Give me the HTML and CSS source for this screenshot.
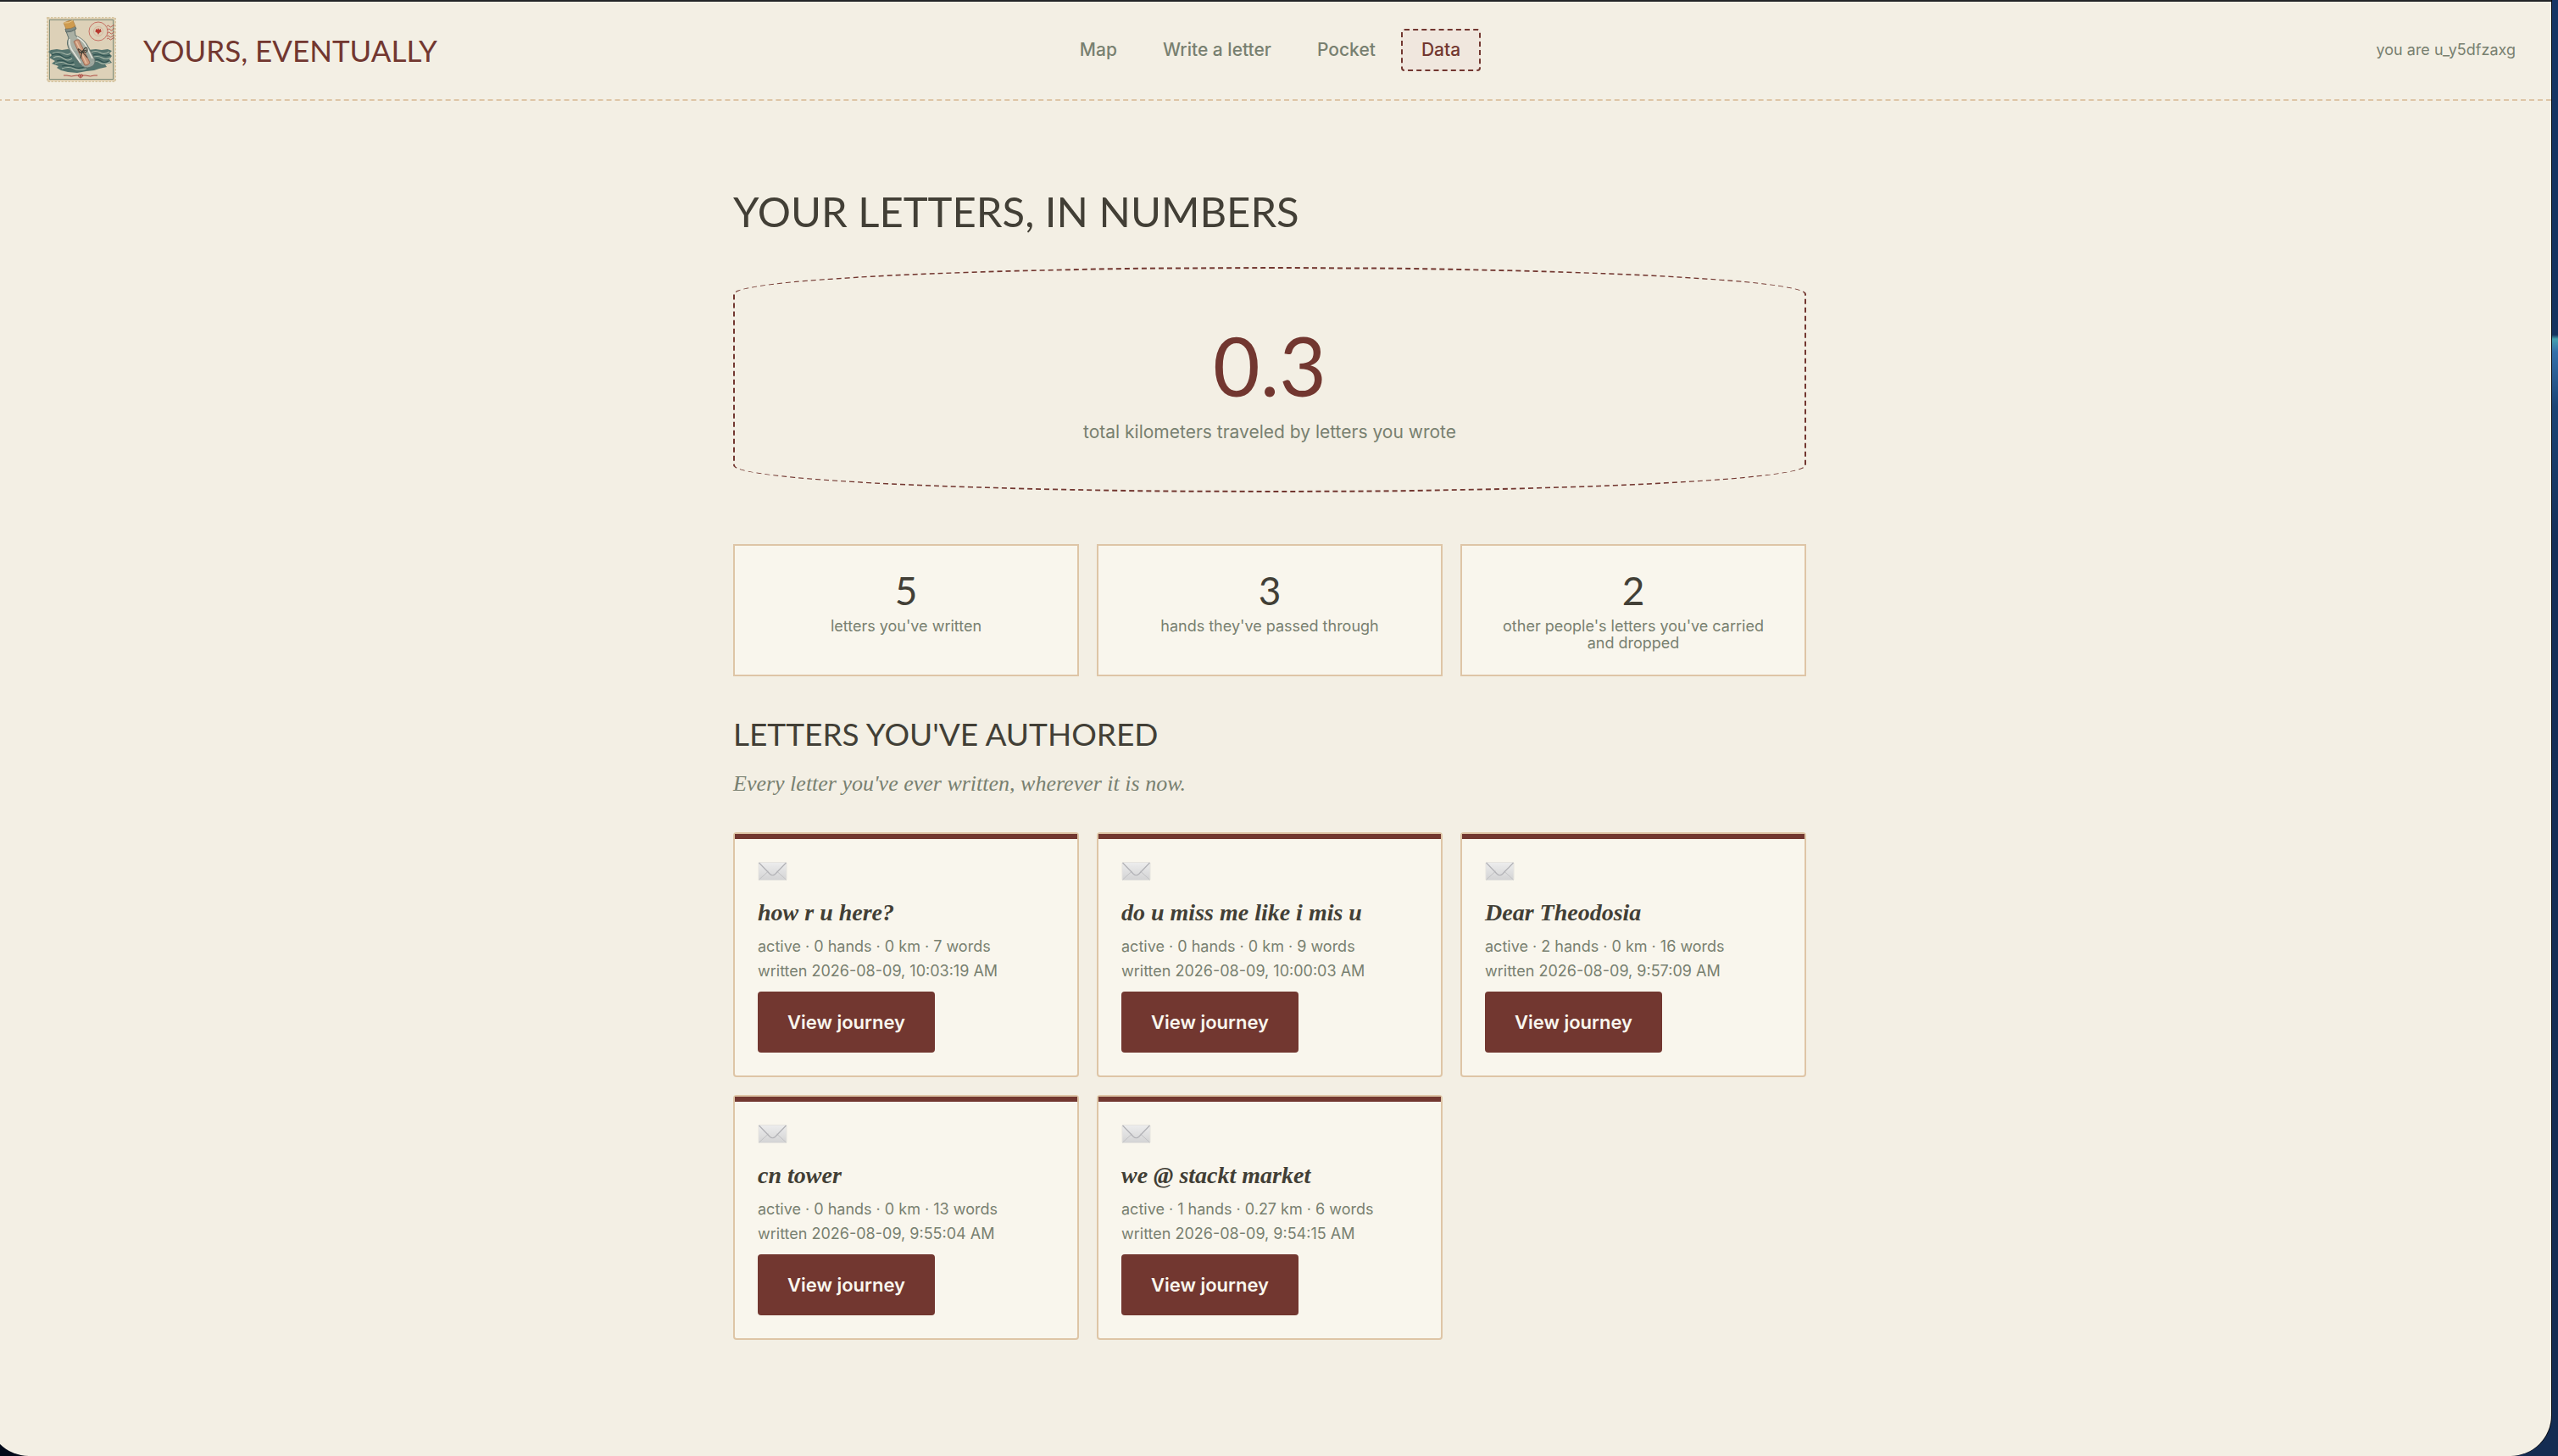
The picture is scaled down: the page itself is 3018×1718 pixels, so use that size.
FILE: index.html
```html
<!DOCTYPE html>
<html lang="en">
<head>
    <meta charset="UTF-8">
    <meta name="viewport" content="width=device-width, initial-scale=1.0">
    <title>Yours, Eventually</title>
    <link rel="stylesheet" href="styles.css">
</head>
<body>
    <!-- envelope shared by every letter card -->
    <svg class="sprite" aria-hidden="true">
        <linearGradient id="paper" x1="0" y1="0" x2="0" y2="1">
            <stop offset="0" stop-color="#ededed"/>
            <stop offset="1" stop-color="#d3d3d4"/>
        </linearGradient>
        <symbol id="envelope" viewBox="0 0 34 22">
            <rect x="0.5" y="0.5" width="33" height="21" rx="1" fill="url(#paper)" stroke="#e6e4df"/>
            <path d="M1 21l11-10M33 21L22 11" fill="none" stroke="#c2c2c4"/>
            <path d="M1 1l13 13.500q3 2.500 6 0L33 1" fill="none" stroke="#b1b1b5" stroke-width="1.200"/>
        </symbol>
    </svg>

    <div class="page">
        <header class="site-header">
            <a class="brand" href="#">
                <svg class="stamp" viewBox="0 0 82 77" aria-hidden="true">
                    <rect x="1" y="1" width="80" height="75" fill="#ddd0b4"/>
                    <rect x="1" y="1" width="80" height="75" fill="none" stroke="#d8c7a4" stroke-width="2" stroke-dasharray="2.500 1.500"/>
                    <rect x="3.500" y="3.500" width="75" height="70" fill="#ddd1b8" stroke="#7e8c7a"/>
                    <!-- sea -->
                    <path d="M5 39l7-1 6 1 7-1 8 2 16-1 9-1 7 1 7-1 5 2-3 3 3 3-3 4 3 4-8 2 2 3-9 2-6 2-9 1-11 2-11-1-8-2-5-3 2-2-8-3 4-3-7-4 3-3-4-4z" fill="#55746e"/>
                    <path d="M7 43q7-3 13 0t9-1M8 48q7-3 12 1t10 0M10 55q8-3 13 0t10 1M52 42q6-3 11 0t11-1M53 48q7-3 12 0t10 0M52 54q7-3 11 0t12-1M18 61q8-3 14 0t15 0" fill="none" stroke="#a9b8a9" stroke-width="1.200"/>
                    <path d="M6 45q7-3 12 1t11 0M12 52q7-2 11 1t9 0M55 45q6-2 10 0t10 0M54 51q6-2 10 1t9 0M18 58q9-2 14 1t16-1" fill="none" stroke="#2f514f" stroke-width="1.200"/>
                    <!-- bottle -->
                    <path d="M23 17l10-3 1 8q11 4 16 15l7 13q1 7-5 9-7 3-12-3L28 41q-6-10-2-16z" fill="#a4aca2" fill-opacity="0.900" stroke="#5f706b"/>
                    <path d="M27 26q-1 9 5 16l8 12M36 24q8 4 12 13l6 12" fill="none" stroke="#e1e3da" stroke-width="1.600"/>
                    <path d="M22 14q6-1 11-4l2 4q-5 4-12 4z" fill="#7f8b85" stroke="#5d6b68"/>
                    <path d="M20 7q6-3 11-3l3 7q-5 3-11 3z" fill="#cf9b4e" stroke="#a97635" stroke-width="0.600"/>
                    <path d="M20 7q6 1 11-3" fill="none" stroke="#e9c98d"/>
                    <!-- scroll -->
                    <path d="M32 29q3-3 6-2l13 27q-2 4-6 3z" fill="#cc9a7c" stroke="#96604b" stroke-width="0.800"/>
                    <path d="M35 29l12 26" stroke="#e5bfa3" stroke-width="1.500"/>
                    <path d="M38 42l9-3M42 41q-7-6-4-1t4 1q5-8 6-3t-6 3l-2 8M42 41l6 7" fill="none" stroke="#3f3d34" stroke-width="1.100"/>
                    <!-- postmark -->
                    <circle cx="61" cy="17" r="11" fill="none" stroke="#c4655a" stroke-width="0.900"/>
                    <circle cx="61" cy="17" r="5.500" fill="none" stroke="#d3a08c" stroke-width="0.600"/>
                    <path d="M61 13l1 2 2-1v2l1 1-3 2-1 2-1-2-3-2 1-1v-2l2 1z" fill="#b8392f"/>
                    <path d="M71 11q2-2 3 0t3 0 3-1M72 15q2-2 3 0t3 0 2-1M72 19q2-2 3 0t3 0 2-1M71 23q2-2 3 0t3 0 3-1M71 26q2-2 3 0t3 0 3-1" fill="none" stroke="#b8564b" stroke-width="0.900"/>
                    <path d="M20 69h4q5 2 11 0h11q6 2 10 0h4M37 69q3-3 3 1t-3-1M43 69q-3-3-3 1t3-1" fill="none" stroke="#ad4b43"/>
                </svg>
                <span class="brand-name">YOURS, EVENTUALLY</span>
            </a>
            <nav class="site-nav">
                <a href="#">Map</a>
                <a href="#">Write a letter</a>
                <a href="#">Pocket</a>
                <a href="#" class="active">Data</a>
            </nav>
            <span class="whoami">you are u_y5dfzaxg</span>
        </header>

        <main>
            <h1>YOUR LETTERS, IN NUMBERS</h1>

            <section class="hero-stat">
                <div class="hero-number">0.3</div>
                <div class="hero-label">total kilometers traveled by letters you wrote</div>
            </section>

            <section class="stats">
                <div class="stat">
                    <div class="stat-number">5</div>
                    <div class="stat-label">letters you've written</div>
                </div>
                <div class="stat">
                    <div class="stat-number">3</div>
                    <div class="stat-label">hands they've passed through</div>
                </div>
                <div class="stat">
                    <div class="stat-number">2</div>
                    <div class="stat-label">other people's letters you've carried and dropped</div>
                </div>
            </section>

            <h2>LETTERS YOU'VE AUTHORED</h2>
            <p class="intro">Every letter you've ever written, wherever it is now.</p>

            <section class="letters">
                <article class="letter">
                    <svg class="envelope"><use href="#envelope"/></svg>
                    <h3>how r u here?</h3>
                    <p>active · 0 hands · 0 km · 7 words</p>
                    <p>written 2026-08-09, 10:03:19 AM</p>
                    <button type="button">View journey</button>
                </article>
                <article class="letter">
                    <svg class="envelope"><use href="#envelope"/></svg>
                    <h3>do u miss me like i mis u</h3>
                    <p>active · 0 hands · 0 km · 9 words</p>
                    <p>written 2026-08-09, 10:00:03 AM</p>
                    <button type="button">View journey</button>
                </article>
                <article class="letter">
                    <svg class="envelope"><use href="#envelope"/></svg>
                    <h3>Dear Theodosia</h3>
                    <p>active · 2 hands · 0 km · 16 words</p>
                    <p>written 2026-08-09, 9:57:09 AM</p>
                    <button type="button">View journey</button>
                </article>
                <article class="letter">
                    <svg class="envelope"><use href="#envelope"/></svg>
                    <h3>cn tower</h3>
                    <p>active · 0 hands · 0 km · 13 words</p>
                    <p>written 2026-08-09, 9:55:04 AM</p>
                    <button type="button">View journey</button>
                </article>
                <article class="letter">
                    <svg class="envelope"><use href="#envelope"/></svg>
                    <h3>we @ stackt market</h3>
                    <p>active · 1 hands · 0.27 km · 6 words</p>
                    <p>written 2026-08-09, 9:54:15 AM</p>
                    <button type="button">View journey</button>
                </article>
            </section>
        </main>
    </div>
</body>
</html>
```

FILE: styles.css
```css
:root {
    --cream: #f3efe4;
    --paper: #f9f6ed;
    --ink: #423f36;
    --sage: #788070;
    --rust: #723730;
    --tan: #dec5a6;
    --display: Lato, sans-serif;
    --sans: Inter, sans-serif;
    --serif: "Liberation Serif", serif;
}
* {
    box-sizing: border-box;
}
body {
    margin: 0;
    font-family: var(--sans);
    color: var(--ink);
    /* desktop showing past the right edge of the window */
    background:
        linear-gradient(#163565 0, #16335f 395px, #45a0ae 400px, #3370aa 415px, #1b4475 480px, #142f59 640px, #142c52 100%) right / 60px 100% no-repeat,
        #030a1a;
}
.sprite {
    position: absolute;
    width: 0;
    height: 0;
}
.page {
    min-height: 100vh;
    margin-left: -14px;
    margin-right: 8px;
    background-color: var(--cream);
    border-top: 2px solid #222428;
    border-radius: 0 0 48px 48px;
    box-shadow: 1px 0 0 #05080f;
}

/* header */
.site-header {
    display: grid;
    grid-template-columns: 1fr auto 1fr;
    align-items: center;
    padding: 18px 42px 20px 69px;
    border-bottom: 2px dashed var(--tan);
}
.brand {
    display: flex;
    align-items: center;
    gap: 32px;
    color: var(--rust);
    text-decoration: none;
}
.stamp {
    width: 82px;
    height: 77px;
}
.brand-name {
    font-family: var(--display);
    font-size: 35px;
}
.site-nav {
    display: flex;
    gap: 6px;
    margin-left: -26px;
}
.site-nav a {
    padding: 0 22px;
    border: 2px dashed transparent;
    border-radius: 4px;
    color: var(--sage);
    font-size: 21px;
    font-weight: 500;
    line-height: 46px;
    text-decoration: none;
}
.site-nav a.active {
    color: var(--rust);
    border-color: var(--rust);
    background-color: #f0e7de;
}
.whoami {
    color: var(--sage);
    font-size: 18px;
    text-align: right;
}

/* content */
main {
    max-width: 1266px;
    margin: 0 auto;
    padding: 100px 0;
}
h1, h2 {
    margin: 0;
    font-family: var(--display);
    font-weight: 400;
}
h1 {
    margin-bottom: 36px;
    font-size: 49px;
    line-height: 60px;
}
h2 {
    margin-bottom: 25px;
    font-size: 37px;
    line-height: 36px;
}
.hero-stat {
    margin-bottom: 61px;
    padding: 69px 40px 55px;
    border: 2px dashed var(--rust);
    border-radius: 50% / 12%;
    text-align: center;
}
.hero-number {
    margin-bottom: 20px;
    color: var(--rust);
    font-family: var(--display);
    font-size: 96px;
    line-height: 90px;
}
.hero-label {
    color: var(--sage);
    font-size: 21px;
    line-height: 28px;
}
.stats, .letters {
    display: grid;
    grid-template-columns: repeat(3, 1fr);
    gap: 21px;
}
.stats {
    margin-bottom: 50px;
}
.stat {
    padding: 33px 40px 27px;
    background-color: var(--paper);
    border: 2px solid var(--tan);
    text-align: center;
}
.stat-number {
    margin-bottom: 12px;
    font-family: var(--display);
    font-size: 46px;
    line-height: 40px;
}
.stat-label {
    color: var(--sage);
    font-size: 18px;
    line-height: 20px;
}
.intro {
    margin: 0 0 41px;
    color: var(--sage);
    font-family: var(--serif);
    font-size: 26px;
    font-style: italic;
    line-height: 32px;
}

/* letter cards */
.letter {
    padding: 27px;
    background-color: var(--paper);
    border: 2px solid var(--tan);
    border-radius: 4px;
}
.letter::before {
    content: "";
    display: block;
    height: 6px;
    margin: -27px -27px 27px;
    background-color: var(--rust);
}
.envelope {
    display: block;
    width: 35px;
    height: 22px;
    margin-bottom: 22px;
}
.letter h3 {
    margin: 0 0 9px;
    font-family: var(--serif);
    font-size: 28px;
    font-style: italic;
    line-height: 32px;
}
.letter p {
    margin: 0;
    color: var(--sage);
    font-size: 18px;
    line-height: 29px;
}
.letter button {
    display: block;
    height: 72px;
    margin-top: 10px;
    padding: 0 35px;
    background-color: var(--rust);
    border: none;
    border-radius: 4px;
    color: var(--paper);
    font-family: var(--sans);
    font-size: 22px;
    font-weight: 600;
    cursor: pointer;
}
.letter button:hover {
    background-color: #5e2c26;
}
```
